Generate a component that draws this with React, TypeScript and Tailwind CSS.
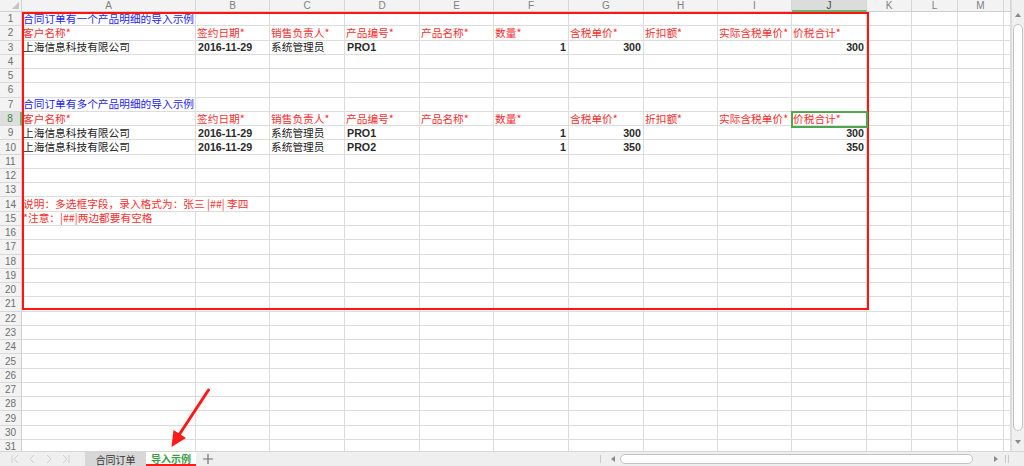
const cols = [
  { l: 'A', w: 'w-[174px]' },
  { l: 'B', w: 'w-[74px]' },
  { l: 'C', w: 'w-[75px]' },
  { l: 'D', w: 'w-[75px]' },
  { l: 'E', w: 'w-[74px]' },
  { l: 'F', w: 'w-[75px]' },
  { l: 'G', w: 'w-[75px]' },
  { l: 'H', w: 'w-[74px]' },
  { l: 'I', w: 'w-[74px]' },
  { l: 'J', w: 'w-[75px]' },
  { l: 'K', w: 'w-[45px]' },
  { l: 'L', w: 'w-[46px]' },
  { l: 'M', w: 'w-[46px]' },
  { l: '', w: 'w-[7px]' },
]

type Cell = { t: string; kind: 'blue' | 'red' | 'text' | 'num' | 'numr'; open?: boolean }

const heads = ['客户名称*', '签约日期*', '销售负责人*', '产品编号*', '产品名称*', '数量*', '含税单价*', '折扣额*', '实际含税单价*', '价税合计*']
const headRow: Record<number, Cell> = Object.fromEntries(heads.map((h, i) => [i, { t: h, kind: 'red' as const }]))

const dataRow = (code: string, price: string): Record<number, Cell> => ({
  0: { t: '上海信息科技有限公司', kind: 'text' },
  1: { t: '2016-11-29', kind: 'num' },
  2: { t: '系统管理员', kind: 'text' },
  3: { t: code, kind: 'num' },
  5: { t: '1', kind: 'numr' },
  6: { t: price, kind: 'numr' },
  9: { t: price, kind: 'numr' },
})

const sheet: Record<number, Record<number, Cell>> = {
  1: { 0: { t: '合同订单有一个产品明细的导入示例', kind: 'blue' } },
  2: headRow,
  3: dataRow('PRO1', '300'),
  7: { 0: { t: '合同订单有多个产品明细的导入示例', kind: 'blue' } },
  8: headRow,
  9: dataRow('PRO1', '300'),
  10: dataRow('PRO2', '350'),
  14: { 0: { t: '说明：多选框字段，录入格式为：张三 |##| 李四', kind: 'red', open: true } },
  15: { 0: { t: '*注意：|##|两边都要有空格', kind: 'red' } },
}

const kindCls = {
  blue: 'text-[#2323f5] pl-[1px]',
  red: 'text-[#ff2d2d] pl-[1px]',
  text: 'text-[#222] pl-[1px]',
  num: "text-[#2a2a2a] font-bold font-['Liberation_Sans',sans-serif] text-[8.6px] pl-[2px]",
  numr: "text-[#2a2a2a] font-bold font-['Liberation_Sans',sans-serif] text-[8.6px] pr-[2px] justify-end",
}

function Tri({ dir }: { dir: 'l' | 'r' | 'u' | 'd' }) {
  const pts = { l: '4,0 4,6 0,3', r: '0,0 0,6 4,3', u: '0,4 6,4 3,0', d: '0,0 6,0 3,4' }[dir]
  const vb = dir === 'l' || dir === 'r' ? '0 0 4 6' : '0 0 6 4'
  return (
    <svg viewBox={vb} className={dir === 'l' || dir === 'r' ? 'w-[4px] h-[6px]' : 'w-[6px] h-[4px]'}>
      <polygon points={pts} fill="#8a8a8a" />
    </svg>
  )
}

export default function App() {
  const rows = Array.from({ length: 31 }, (_, i) => i + 1)
  return (
    <div className="relative w-[1024px] h-[466px] overflow-hidden bg-white font-['Noto_Sans_CJK_SC','Liberation_Sans',sans-serif] select-none">
      <div className="flex h-[451px] overflow-hidden">
        <div className="w-[1011px] flex flex-col">
          <div className="flex h-[12px] shrink-0">
            <div className="relative w-[22px] h-full bg-[#f3f3f3] border-r border-b border-[#cfcfcf]">
              <div className="absolute right-[2px] bottom-[2px] w-0 h-0 border-l-[7px] border-l-transparent border-b-[7px] border-b-[#c4c4c4]" />
            </div>
            {cols.map((c) => (
              <div
                key={c.l + c.w}
                className={`${c.w} h-full flex items-center justify-center border-r border-[#d5d5d5] text-[10px] font-['Liberation_Sans',sans-serif] ${
                  c.l === 'J'
                    ? 'bg-[#dcdcdc] text-[#444] border-b-2 border-b-[#6bb26b]'
                    : 'bg-[#f3f3f3] text-[#808080] border-b border-b-[#cfcfcf]'
                }`}
              >
                {c.l}
              </div>
            ))}
          </div>
          {rows.map((r) => {
            const data = sheet[r] || {}
            const sel = r === 8
            return (
              <div key={r} className="flex h-[14.27px] shrink-0">
                <div
                  className={`w-[22px] h-full flex items-center justify-center text-[10px] font-['Liberation_Sans',sans-serif] border-b border-[#d9d9d9] ${
                    sel
                      ? 'bg-[#dedede] text-[#2e8b3a] border-r-2 border-r-[#6bb26b]'
                      : 'bg-[#f3f3f3] text-[#6e6e6e] border-r border-r-[#cfcfcf]'
                  }`}
                >
                  {r}
                </div>
                {cols.map((c, ci) => {
                  const cell = data[ci]
                  return (
                    <div
                      key={ci}
                      className={`${c.w} h-full flex items-center border-b border-[#dcdcdc] ${
                        cell?.open ? '' : 'border-r'
                      } border-r-[#dcdcdc] whitespace-nowrap text-[10.7px] leading-[14px] ${cell ? kindCls[cell.kind] : ''}`}
                    >
                      {cell ? <span className="relative z-10">{cell.t}</span> : null}
                    </div>
                  )
                })}
              </div>
            )
          })}
        </div>
        <div className="w-[13px] h-full bg-[#f0f0f0] border-l border-[#dedede] flex flex-col items-center pt-[13px] pb-[5px]">
          <Tri dir="u" />
          <div className="mt-[7px] flex-1 w-[10px] bg-white border border-[#c2c2c2] rounded-full" />
          <div className="mt-[9px] mb-[2px]">
            <Tri dir="d" />
          </div>
        </div>
      </div>

      <div className="flex items-stretch h-[15px] bg-[#efefef] border-t border-[#d6d6d6] font-['Noto_Sans_CJK_SC',sans-serif]">
        <div className="w-[85px] flex items-center gap-[9px] pl-[11px]">
          <svg viewBox="0 0 8 10" className="w-[8px] h-[10px]"><path d="M1 1v8M7 1L3 5l4 4" fill="none" stroke="#cfcfcf" strokeWidth="1" /></svg>
          <svg viewBox="0 0 8 10" className="w-[8px] h-[10px]"><path d="M6 1L2 5l4 4" fill="none" stroke="#cfcfcf" strokeWidth="1" /></svg>
          <svg viewBox="0 0 8 10" className="w-[8px] h-[10px]"><path d="M2 1l4 4-4 4" fill="none" stroke="#cfcfcf" strokeWidth="1" /></svg>
          <svg viewBox="0 0 8 10" className="w-[8px] h-[10px]"><path d="M7 1v8M1 1l4 4-4 4" fill="none" stroke="#cfcfcf" strokeWidth="1" /></svg>
        </div>
        <div className="w-[61px] bg-[#d7d7d7] flex items-center justify-center text-[10px] text-[#333]">合同订单</div>
        <div className="w-[50px] bg-white flex items-center justify-center text-[10px] font-semibold text-[#3a9e44] border-b-2 border-[#ff1a1a]">导入示例</div>
        <div className="w-[24px] flex items-center justify-center">
          <svg viewBox="0 0 10 10" className="w-[10px] h-[10px]"><path d="M5 0v10M0 5h10" stroke="#707070" strokeWidth="1.2" /></svg>
        </div>
        <div className="flex-1" />
        <div className="w-[426px] flex items-center pl-[2px]">
          <div className="w-px h-[8px] bg-[#c8c8c8]" />
          <div className="ml-[10px]"><Tri dir="l" /></div>
          <div className="ml-[5px] w-[353px] h-[10px] bg-white border border-[#c2c2c2] rounded-full" />
          <div className="ml-[21px]"><Tri dir="r" /></div>
          <div className="ml-[7px] flex gap-[2px]">
            <div className="w-px h-[8px] bg-[#c8c8c8]" />
            <div className="w-px h-[8px] bg-[#c8c8c8]" />
          </div>
        </div>
      </div>

      {/* annotations over the sheet */}
      <div className="absolute left-[22px] top-[12px] w-[847px] h-[298px] border-2 border-[#ff1414] pointer-events-none" />
      <div className="absolute left-[791px] top-[111px] w-[77px] h-[17px] border-2 border-[#4fa64f] pointer-events-none" />
      <svg className="absolute left-0 top-0 w-[1024px] h-[466px] pointer-events-none" viewBox="0 0 1024 466">
        <line x1="208.5" y1="390" x2="179" y2="435" stroke="#ff1a1a" strokeWidth="3" strokeLinecap="round" />
        <polygon points="171.5,447 173.5,430 186,438" fill="#ff1a1a" />
      </svg>
    </div>
  )
}
